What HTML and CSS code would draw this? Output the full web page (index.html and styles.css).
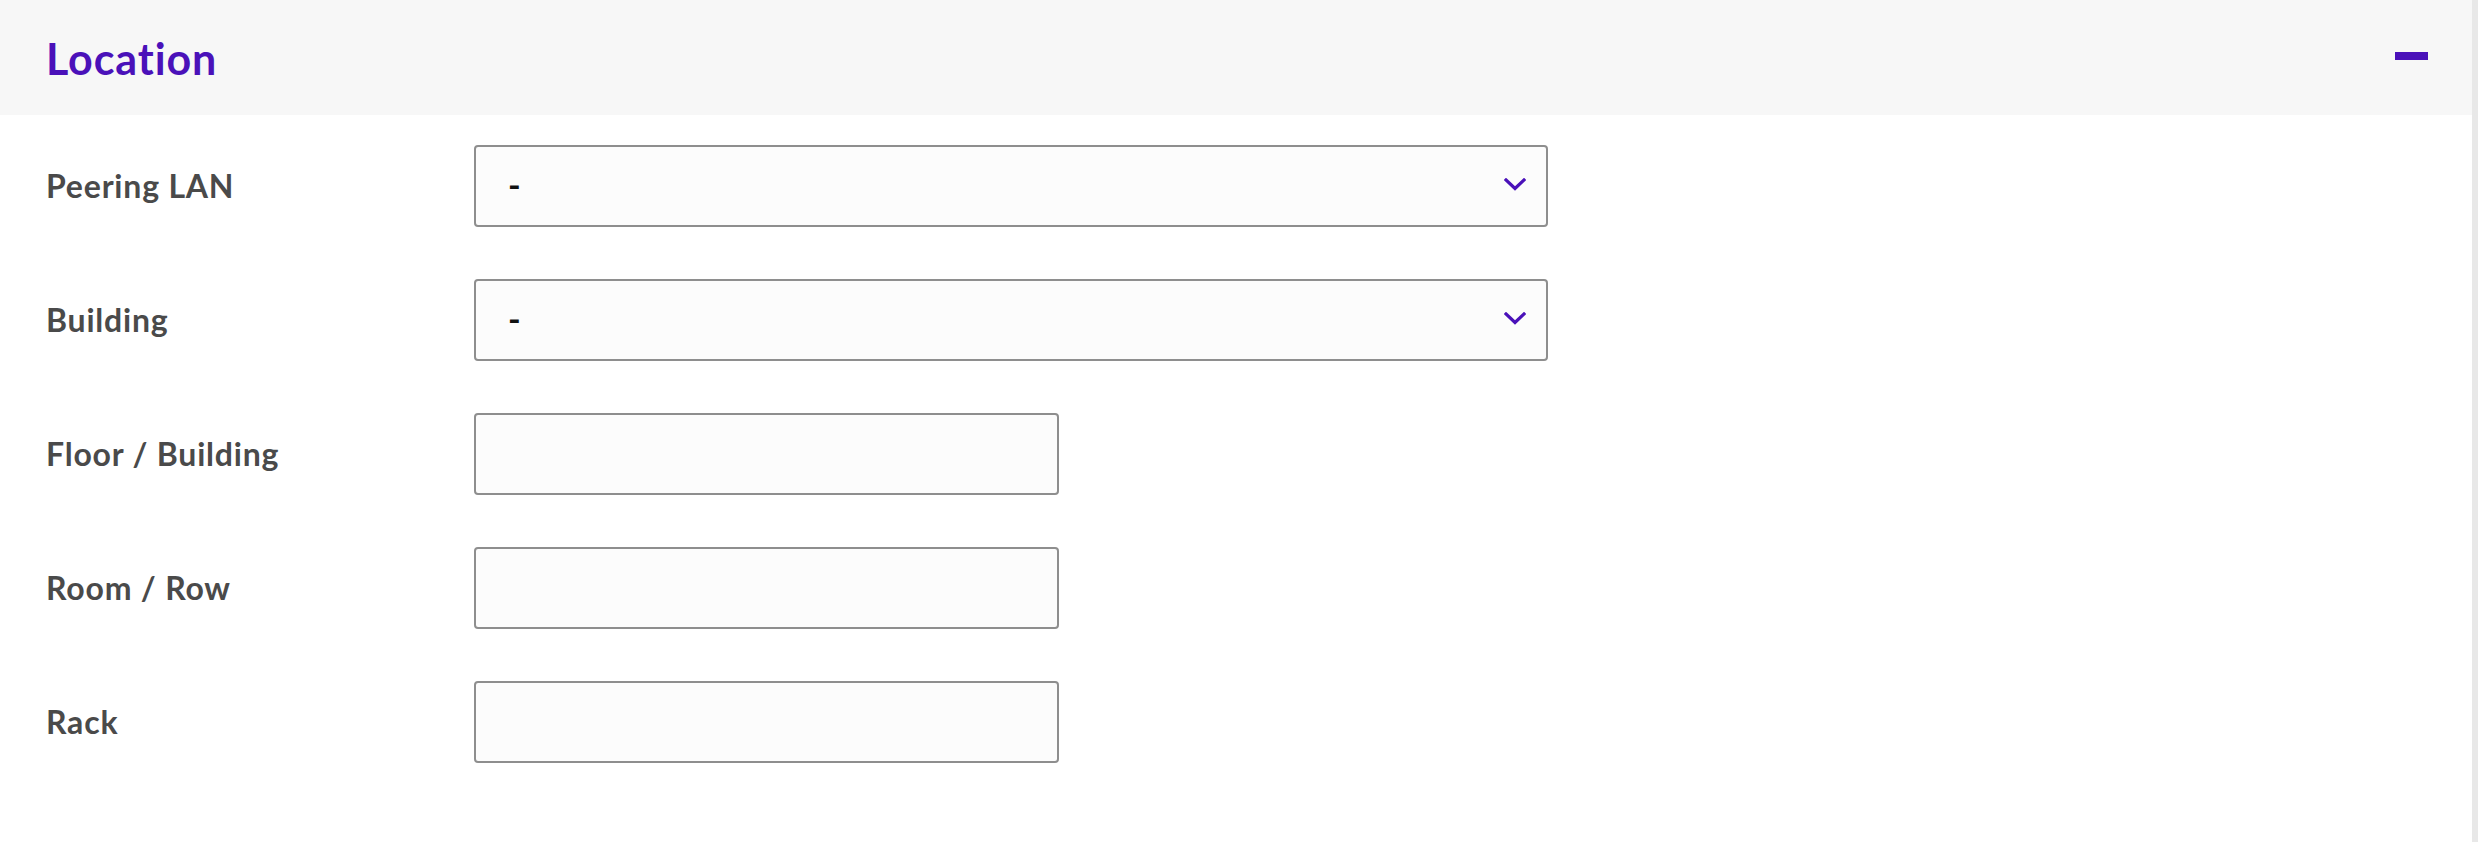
FILE: index.html
```html
<!DOCTYPE html>
<html lang="en">
<head>
<meta charset="utf-8">
<title>Location</title>
<link rel="stylesheet" href="styles.css">
</head>
<body>
<div class="page">
  <section class="panel">
    <header class="panel-header">
      <h2 class="panel-title">Location</h2>
      <button class="collapse" aria-label="Collapse"><span class="collapse-bar"></span></button>
    </header>
    <form class="form">
      <div class="row">
        <label class="label">Peering LAN</label>
        <div class="select">
          <span class="select-value">-</span>
          <svg class="chevron" width="22" height="13" viewBox="0 0 22 13"><path d="M2 2 L11 10.5 L20 2" fill="none" stroke="#4a11b9" stroke-width="3.2" stroke-linecap="square"/></svg>
        </div>
      </div>
      <div class="row">
        <label class="label">Building</label>
        <div class="select">
          <span class="select-value">-</span>
          <svg class="chevron" width="22" height="13" viewBox="0 0 22 13"><path d="M2 2 L11 10.5 L20 2" fill="none" stroke="#4a11b9" stroke-width="3.2" stroke-linecap="square"/></svg>
        </div>
      </div>
      <div class="row">
        <label class="label">Floor / Building</label>
        <div class="input"></div>
      </div>
      <div class="row">
        <label class="label">Room / Row</label>
        <div class="input"></div>
      </div>
      <div class="row">
        <label class="label">Rack</label>
        <div class="input"></div>
      </div>
    </form>
  </section>
</div>
</body>
</html>
```

FILE: styles.css
```css
html, body {
  margin: 0;
  padding: 0;
  background: #ffffff;
}
.page {
  box-sizing: border-box;
  width: 2478px;
  height: 842px;
  border-right: 6px solid #e8e8e8;
  font-family: Lato, "Liberation Sans", sans-serif;
}
.panel-header {
  height: 115px;
  background: #f7f7f7;
  display: flex;
  align-items: center;
  justify-content: space-between;
  padding: 0 44px 0 46px;
  box-sizing: border-box;
}
.panel-title {
  margin: 0;
  font-size: 43px;
  font-weight: 700;
  letter-spacing: 0.9px;
  color: #4a11b9;
  line-height: 1;
  padding-top: 2px;
}
.collapse {
  border: 0;
  background: none;
  padding: 0;
  width: 33px;
  height: 20px;
  display: flex;
  align-items: center;
  margin-top: -4px;
}
.collapse-bar {
  display: block;
  width: 33px;
  height: 8px;
  background: #4a11b9;
}
.form {
  padding: 30px 0 0 46px;
  display: flex;
  flex-direction: column;
  gap: 52px;
}
.row {
  display: flex;
  align-items: center;
  height: 82px;
}
.label {
  width: 428px;
  flex: none;
  font-size: 32px;
  font-weight: 700;
  letter-spacing: 0.8px;
  color: #4a4a4a;
  padding-bottom: 2px;
}
.select, .input {
  box-sizing: border-box;
  height: 82px;
  border: 2px solid #8e8e8e;
  border-radius: 4px;
  background: #fcfcfc;
}
.select {
  width: 1074px;
  display: flex;
  align-items: center;
  justify-content: space-between;
  padding: 0 20px 0 32px;
}
.select-value {
  font-size: 34px;
  font-weight: 700;
  color: #111111;
  padding-bottom: 4px;
}
.chevron {
  display: block;
  margin-bottom: 4px;
}
.input {
  width: 585px;
}
```
